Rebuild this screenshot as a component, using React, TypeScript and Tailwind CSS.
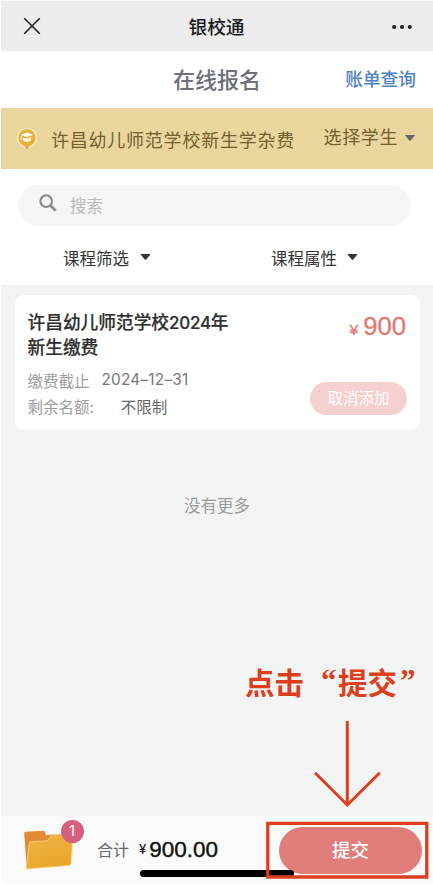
import React from 'react';

function CaretDown({ className }: { className: string }) {
  return (
    <svg viewBox="0 0 10 6" className={className} fill="currentColor">
      <path d="M0.6 0h8.8q.9 0 .3.7L5.7 5.4q-.7.8-1.4 0L.3.7Q-.3 0 .6 0Z" />
    </svg>
  );
}

function TopBar() {
  return (
    <header className="flex h-[50px] items-center bg-[#ececec] pl-[22px] pr-[21px]">
      <svg viewBox="0 0 18 18" className="h-[18px] w-[18px]" fill="none" stroke="#222" strokeWidth="1.6">
        <path d="M1.2 1.2 16.8 16.8M16.8 1.2 1.2 16.8" />
      </svg>
      <h1 className="flex-1 text-center text-[18.7px] font-medium leading-[26px] text-[#1c1c1c]">银校通</h1>
      <svg viewBox="0 0 20 6" className="mt-[2px] h-[6px] w-[20px]" fill="#222">
        <circle cx="2.2" cy="3" r="2.100" />
        <circle cx="10" cy="3" r="2.100" />
        <circle cx="17.8" cy="3" r="2.100" />
      </svg>
    </header>
  );
}

function PageTitle() {
  return (
    <div className="grid h-[57px] grid-cols-[172px_1fr_auto] items-center pb-[3px] pr-[17px]">
      <span />
      <h2 className="text-[22px] font-medium leading-[32px] text-[#6c6e78]">在线报名</h2>
      <a className="text-[17.7px] font-medium leading-[26px] text-[#4f82c4]">账单查询</a>
    </div>
  );
}

function SchoolIcon() {
  return (
    <svg viewBox="0 0 22 26" className="mt-[2px] h-[26px] w-[22px]">
      <path d="M11 .8A10 10 0 0 0 1 10.8c0 4.600 3 7.600 6.500 9L11 24.500l3.500-4.700c3.500-1.400 6.500-4.400 6.500-9A10 10 0 0 0 11 .8Z" fill="#f8eac2" />
      <circle cx="11" cy="10.600" r="8.700" fill="#e8b03d" />
      <path d="M8.800 19.300h4.400L11 23.600Z" fill="#dca03c" />
      <path d="m4.500 8 6.800-2.500 6 2.200-6.500 2.400Z" fill="#fff" />
      <path d="M7 10.500c2.500 1.300 5.500 1.200 8-.2v2.900c-2.300 2-5.800 2-8 .2Z" fill="#fff8e3" />
      <path d="M5.300 9v4" stroke="#fff" strokeWidth="1" />
    </svg>
  );
}

function SchoolBar() {
  return (
    <div className="flex h-[61px] items-center bg-[#ead59f] pl-[15px] pr-[17px] text-[#74602f]">
      <SchoolIcon />
      <span className="ml-[13px] whitespace-nowrap text-[18px] leading-[26px] tracking-[0.77px]">许昌幼儿师范学校新生学杂费</span>
      <span className="mb-[6px] ml-auto whitespace-nowrap text-[18px] leading-[26px] tracking-[0.6px]">选择学生</span>
      <CaretDown className="mb-[1px] ml-[6px] h-[6px] w-[12px] text-[#666769]" />
    </div>
  );
}

function SearchAndFilters() {
  return (
    <div className="h-[116px] px-[17px] pt-[16px]">
      <div className="flex h-[41px] w-[393px] items-center rounded-full bg-[#f5f5f5] pl-[21px]">
        <svg viewBox="0 0 18 18" className="mb-[5px] h-[18px] w-[18px]" fill="none" stroke="#8c8c8c" strokeWidth="2.200">
          <circle cx="7.200" cy="7.200" r="5.800" />
          <path d="m11.500 11.500 5.200 5.200" strokeWidth="2.800" />
        </svg>
        <span className="mb-[2px] ml-[13px] text-[16.5px] leading-[24px] text-[#b9b9b9]">搜索</span>
      </div>
      <div className="flex h-[32px] items-center pl-[45px] pt-[32px] text-[16.500px] text-[#333]">
        <span className="w-[66px] leading-[24px]">课程筛选</span>
        <CaretDown className="mb-[3px] ml-[11px] h-[6px] w-[11px]" />
        <span className="ml-[120px] w-[66px] leading-[24px]">课程属性</span>
        <CaretDown className="mb-[3px] ml-[10px] h-[6px] w-[11px]" />
      </div>
    </div>
  );
}

function CourseCard() {
  return (
    <article className="flex h-[135px] w-[405px] justify-between rounded-[9px] bg-white px-[13px]">
      <div className="-ml-[0.5px] pt-[14px]">
        <h3 className="text-[17.7px] font-medium leading-[25px] text-[#303030] [-webkit-text-stroke:0.2px_#303030]">
          许昌幼儿师范学校<span className="font-['Inter'] text-[17px] leading-none tracking-[-0.25px]">2024</span>年
          <br />
          新生缴费
        </h3>
        <div className="mt-[8px] flex text-[15.5px] leading-[26px] text-[#9c9c9c]">
          <span>缴费截止</span>
          <span className="ml-[12px] font-['Inter'] text-[15.3px] tracking-[0.25px] text-[#777]">2024–12–31</span>
        </div>
        <div className="flex text-[15.500px] leading-[26px] text-[#9c9c9c]">
          <span>剩余名额:</span>
          <span className="ml-[27px] text-[#666]">不限制</span>
        </div>
      </div>
      <div className="flex flex-col items-end">
        <div className="mr-[1px] flex h-[40px] items-baseline pt-[14px] text-[#e07976]">
          <span className="font-['Liberation_Sans'] text-[15px] [-webkit-text-stroke:0.4px_#e07976]">¥</span>
          <span className="ml-[5px] font-['Liberation_Sans'] text-[25.7px] leading-[34px] [-webkit-text-stroke:0.3px_#e07976]">900</span>
        </div>
        <button className="mt-[47px] h-[33px] w-[97px] rounded-full bg-[#f4d0cf] pb-[2px] text-[15.5px] leading-[31px] text-white">取消添加</button>
      </div>
    </article>
  );
}

function Callout() {
  return (
    <div className="pointer-events-none absolute left-0 top-0 h-[885px] w-[433px] text-[#dc3f20]">
      <div className="absolute left-[245px] top-[661px] flex whitespace-nowrap text-[29.500px] font-bold leading-[40px]">
        <span>点击</span>
        <span className="ml-[17px] w-[17px] font-['Liberation_Serif'] text-[31px]">“</span>
        <span>提交</span>
        <span className="ml-[3px] font-['Liberation_Serif'] text-[31px]">”</span>
      </div>
      <svg viewBox="0 0 433 885" className="absolute inset-0" fill="none" stroke="currentColor" strokeWidth="3">
        <path d="M347.300 721V804M315 772.800l32.300 32.200 32.500-32.200" />
        <path d="M267.800 823.300H426.800V877H267.800Z" strokeWidth="3.300" />
      </svg>
    </div>
  );
}

function FolderIcon() {
  return (
    <svg viewBox="0 0 52 42" className="h-[42px] w-[52px]">
      <defs>
        <linearGradient id="folderFront" x1="0" y1="0" x2="0.500" y2="1">
          <stop offset="0" stopColor="#efb44a" />
          <stop offset="1" stopColor="#e8a629" />
        </linearGradient>
      </defs>
      <path d="M1.200 4.500Q1.100 2.800 2.600 2.700L20 1.700q2-.1 2.300 1.600l.5 2.600L47 4.600q2-.1 1.900 1.800L47 32 3.800 39.500Z" fill="#e38c38" />
      <path d="M6.200 14.500q.1-1.700 1.800-1.800l15.300-.8q1.300-.1 2-1.300l2.500-3.700q.7-1 1.900-1.100L48 5.200q2-.1 1.900 1.800L48 34.500q-.2 1.800-2 1.900L4.300 39.900q-1 .1-.9-1Z" fill="url(#folderFront)" stroke="#f8d68e" strokeWidth=".8" />
    </svg>
  );
}

function CheckoutBar() {
  return (
    <footer className="relative flex h-[68px] items-center bg-[#fafafa] pl-[22px] pr-[11px]">
      <div className="relative">
        <FolderIcon />
        <span className="absolute left-[37.500px] top-[-9px] flex h-[23px] w-[23px] items-center justify-center rounded-full bg-[#d4607e] font-['Inter'] text-[15px] text-white">1</span>
      </div>
      <span className="mb-[2px] ml-[22px] text-[16px] leading-[24px] text-[#666]">合计</span>
      <span className="ml-[10px] font-['Inter'] text-[13px] font-medium text-[#222]">¥</span>
      <span className="ml-[3px] font-['Liberation_Sans'] text-[22.5px] leading-[30px] text-[#111] [-webkit-text-stroke:0.4px_#111]">900.00</span>
      <button className="ml-auto h-[47px] w-[143px] rounded-full bg-[#e17e7b] text-[18.500px] font-medium text-white">提交</button>
      <div className="absolute left-[139px] top-[54px] h-[6.500px] w-[154px] rounded-full bg-black" />
    </footer>
  );
}

export default function App() {
  return (
    <div className="relative h-[885px] w-[433px] overflow-hidden bg-white pl-[1px] pt-[1px] font-['Noto_Sans_CJK_SC',sans-serif]">
      <TopBar />
      <PageTitle />
      <SchoolBar />
      <SearchAndFilters />
      <main className="h-[531px] bg-[#f2f4f4] pl-[14px] pt-[10px]">
        <CourseCard />
        <p className="mr-[14px] mt-[63px] text-center text-[16.500px] leading-[24px] text-[#9b9b9b]">没有更多</p>
      </main>
      <CheckoutBar />
      <Callout />
    </div>
  );
}
